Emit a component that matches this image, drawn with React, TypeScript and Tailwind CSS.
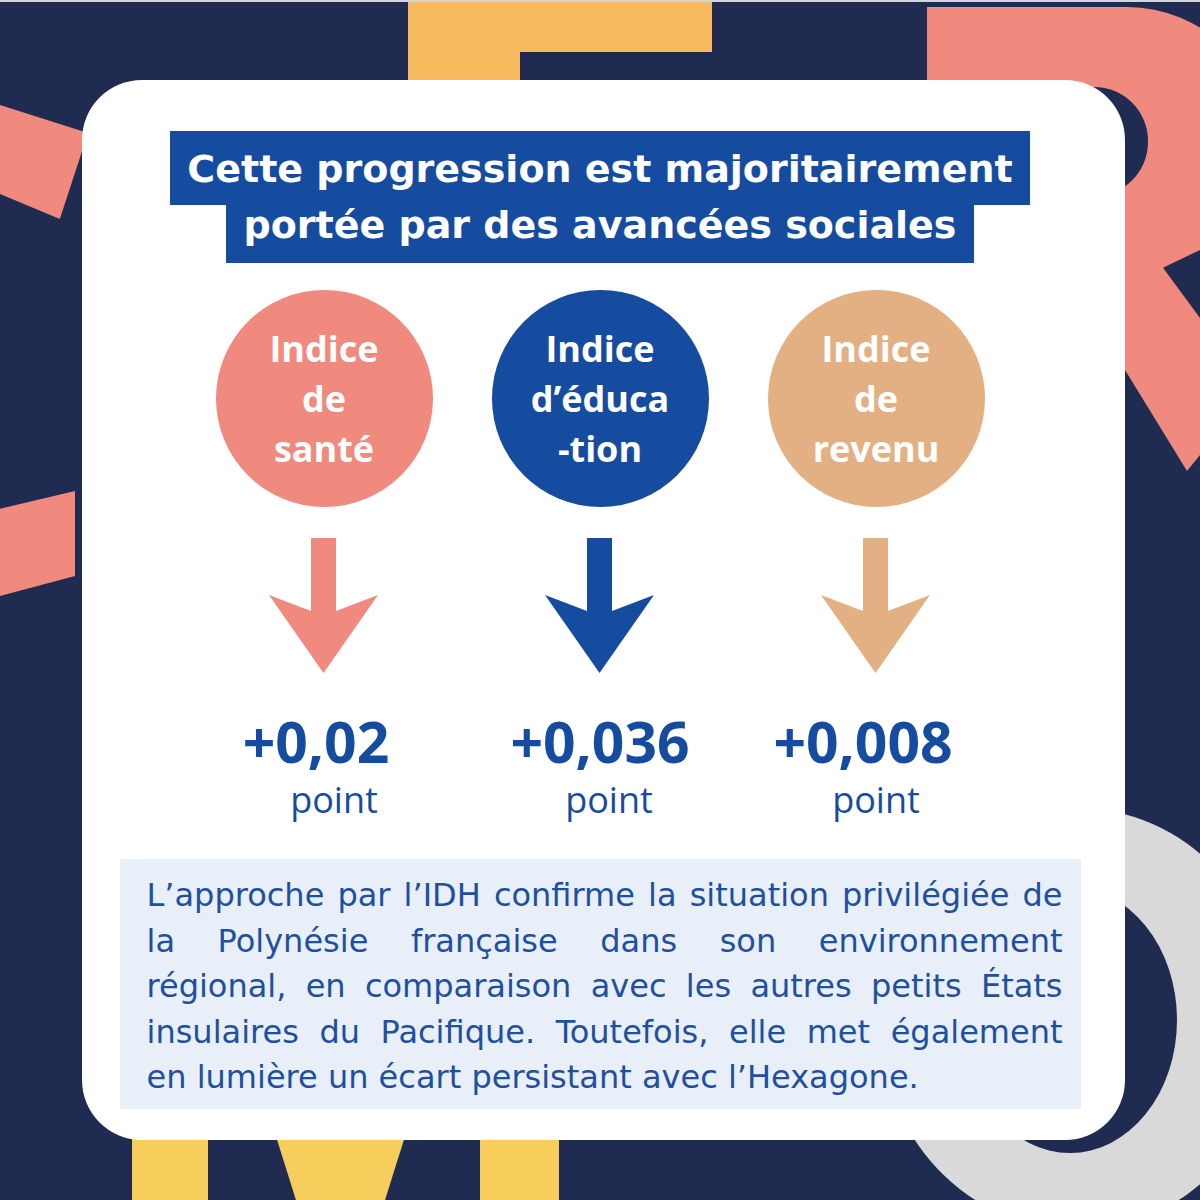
const NAVY = "bg-[#1f2b50]"

type Indice = {
  label: string[]
  circle: string
  arrow: string
  value: string
  valueShift: string
  pointShift: string
}

const indices: Indice[] = [
  {
    label: ["Indice", "de", "santé"],
    circle: "bg-[#f0897e]",
    arrow: "#f0897e",
    value: "+0,02",
    valueShift: "pr-[16px]",
    pointShift: "pl-[20px]",
  },
  {
    label: ["Indice", "d’éduca", "-tion"],
    circle: "bg-[#164ca0]",
    arrow: "#164ca0",
    value: "+0,036",
    valueShift: "pr-0",
    pointShift: "pl-[18px]",
  },
  {
    label: ["Indice", "de", "revenu"],
    circle: "bg-[#e3b084]",
    arrow: "#e3b084",
    value: "+0,008",
    valueShift: "pr-[26px]",
    pointShift: "pl-0",
  },
]

function DownArrow({ color }: { color: string }) {
  return (
    <svg width="110" height="136" viewBox="0 0 110 136" className="block">
      <polygon points="42,0 67,0 67,73 109,57 54.5,135 0,57 42,73" fill={color} />
    </svg>
  )
}

// big cropped letters behind the card
function Background() {
  return (
    <>
      <div className="absolute left-[408px] top-0 w-[304px] h-[52px] bg-[#f6b95d]" />
      <div className="absolute left-[408px] top-0 w-[112px] h-[90px] bg-[#f6b95d]" />

      <div className="absolute left-[927px] top-[7px] w-[340px] h-[464px] bg-[#f0897e] rounded-tr-[140px]" />
      <div className={`absolute left-[1050px] top-[87px] w-[98px] h-[109px] rounded-r-[54px] ${NAVY}`} />
      <div className={`absolute left-[1163px] top-[250px] w-[37px] h-[68px] ${NAVY} [clip-path:polygon(100%_0,0_26%,100%_100%)]`} />
      <div className={`absolute left-[1125px] top-[370px] w-[62px] h-[101px] ${NAVY} [clip-path:polygon(0_0,100%_100%,0_100%)]`} />
      <div className={`absolute left-[1187px] top-[455px] w-[13px] h-[16px] ${NAVY} [clip-path:polygon(100%_0,100%_100%,0_100%)]`} />

      <div className="absolute left-0 top-[105px] w-[88px] h-[114px] bg-[#f0897e] [clip-path:polygon(0_0,100%_24.6%,68%_100%,0_78%)]" />
      <div className="absolute left-0 top-[491px] w-[75px] h-[105px] bg-[#f0897e] [clip-path:polygon(0_17%,100%_0,100%_81%,0_100%)]" />

      <div className="absolute left-[132px] top-[1100px] w-[76px] h-[100px] bg-[#f7cd5c]" />
      <div className="absolute left-[274px] top-[1130px] w-[133px] h-[70px] bg-[#f7cd5c] [clip-path:polygon(0_0,100%_0,83.5%_100%,16.5%_100%)]" />
      <div className="absolute left-[480px] top-[1100px] w-[79px] h-[100px] bg-[#f7cd5c]" />

      <div className="absolute left-[879px] top-[808px] w-[396px] h-[422px] rounded-[50%] bg-[#d9d9d9]" />
      <div className={`absolute left-[963px] top-[887px] w-[214px] h-[266px] rounded-[50%] ${NAVY}`} />

      <div className="absolute left-0 top-0 w-full h-[2px] bg-[#d3d6de] z-20" />
    </>
  )
}

export default function App() {
  return (
    <div className={`relative w-[1200px] h-[1200px] overflow-hidden ${NAVY} pt-[80px] pl-[82px]`}>
      <Background />

      <div className="relative z-10 w-[1043px] h-[1060px] bg-white rounded-[60px] pt-[51px] pr-[7px] flex flex-col items-center">
        <div className="flex flex-col items-center text-white font-bold text-[38px] font-['DejaVu_Sans',sans-serif] whitespace-nowrap">
          <div className="bg-[#164ca0] h-[74px] pt-[18px] px-[17px] leading-[40px]">
            Cette progression est majoritairement
          </div>
          <div className="bg-[#164ca0] h-[58px] px-[18px] leading-[40px]">
            portée par des avancées sociales
          </div>
        </div>

        <div className="grid grid-cols-3 w-[828px] mt-[27px]">
          {indices.map((item) => (
            <div key={item.value} className="flex flex-col items-center">
              <div
                className={`w-[217px] h-[217px] rounded-full ${item.circle} flex flex-col items-center justify-center text-white font-bold text-[36px] leading-[50px] font-['Open_Sans',sans-serif]`}
              >
                {item.label.map((line) => (
                  <span key={line}>{line}</span>
                ))}
              </div>
              <div className="mt-[31px]">
                <DownArrow color={item.arrow} />
              </div>
              <div
                className={`mt-[34px] ${item.valueShift} text-[#164ca0] font-bold text-[57px] leading-[66px] font-['Open_Sans',sans-serif]`}
              >
                {item.value}
              </div>
              <div
                className={`mt-[4px] ${item.pointShift} text-[#164ca0] text-[36px] leading-[44px] font-['Open_Sans',sans-serif]`}
              >
                point
              </div>
            </div>
          ))}
        </div>

        <div className="mt-[37px] w-[961px] bg-[#e8eff9] pt-[14px] pb-[8px] pl-[27px] pr-[18px] text-[#1f4f9f] text-[32px] leading-[45.5px] font-['DejaVu_Sans',sans-serif]">
          <p className="whitespace-nowrap text-justify [text-align-last:justify]">
            L’approche par l’IDH confirme la situation privilégiée de
          </p>
          <p className="whitespace-nowrap text-justify [text-align-last:justify]">
            la Polynésie française dans son environnement
          </p>
          <p className="whitespace-nowrap text-justify [text-align-last:justify]">
            régional, en comparaison avec les autres petits États
          </p>
          <p className="whitespace-nowrap text-justify [text-align-last:justify]">
            insulaires du Pacifique. Toutefois, elle met également
          </p>
          <p className="whitespace-nowrap">en lumière un écart persistant avec l’Hexagone.</p>
        </div>
      </div>
    </div>
  )
}
